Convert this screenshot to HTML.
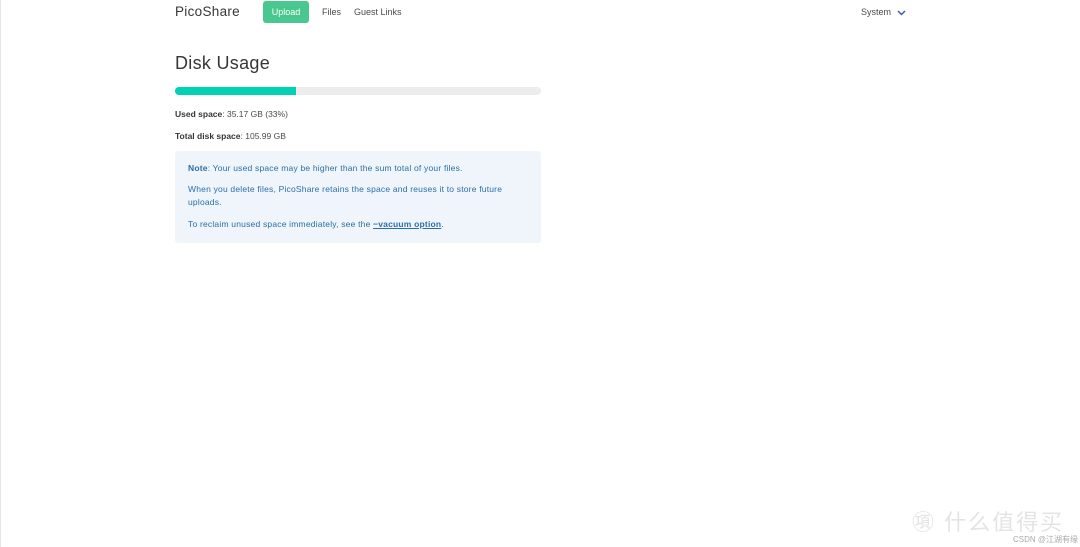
<!DOCTYPE html>
<html><head><meta charset="utf-8"><style>
html,body{margin:0;padding:0;background:#fff;width:1080px;height:547px;overflow:hidden;font-family:"Liberation Sans","Noto Sans CJK SC",sans-serif;color:#4a4a4a}
.edge{position:absolute;left:0;top:0;width:1px;height:547px;background:#e6e6e6}
.brand{position:absolute;left:175px;top:4px;font-size:13.5px;color:#363636;letter-spacing:.3px}
.up{position:absolute;left:263px;top:1px;width:46px;height:22px;background:#48c78e;border-radius:3px;color:#fff;font-size:9px;text-align:center;line-height:22px}
.nav{position:absolute;top:7px;font-size:9px;color:#4a4a4a}
h1{position:absolute;left:175px;top:53px;margin:0;font-size:18px;font-weight:normal;color:#363636;letter-spacing:.3px}
.bar{position:absolute;left:175px;top:87px;width:366px;height:8px;border-radius:4px;background:#ededed;overflow:hidden}
.bar div{width:121px;height:8px;background:#00d1b2}
.t{position:absolute;left:175px;font-size:8.5px;color:#4a4a4a}
.t b{color:#363636}
.note{position:absolute;left:175px;top:151px;width:366px;height:92px;background:#eff5fb;border-radius:3px;color:#296fa8;font-size:8.5px;letter-spacing:.2px}
.note p{position:absolute;left:13px;margin:0;width:330px;line-height:13px}
.note a{color:#296fa8;font-weight:bold;text-decoration:underline}
.wm{position:absolute;left:912px;top:505px;font-size:22px;color:#e4e4e4;letter-spacing:2px}
.csdn{position:absolute;left:1013px;top:534px;font-size:8px;color:#aaa}
</style></head><body>
<div class="edge"></div>
<div class="brand">PicoShare</div>
<div class="up">Upload</div>
<div class="nav" style="left:322px">Files</div>
<div class="nav" style="left:354px">Guest Links</div>
<div class="nav" style="left:861px">System</div>
<svg style="position:absolute;left:897px;top:10px" width="9" height="6" viewBox="0 0 9 6"><path d="M1 1L4.5 4.5L8 1" fill="none" stroke="#3e56c4" stroke-width="1.5"/></svg>
<h1>Disk Usage</h1>
<div class="bar"><div></div></div>
<div class="t" style="top:109px"><b>Used space</b>: 35.17 GB (33%)</div>
<div class="t" style="top:131px"><b>Total disk space</b>: 105.99 GB</div>
<div class="note">
<p style="top:11px"><b>Note</b>: Your used space may be higher than the sum total of your files.</p>
<p style="top:32px">When you delete files, PicoShare retains the space and reuses it to store future uploads.</p>
<p style="top:67px">To reclaim unused space immediately, see the <a>−vacuum option</a>.</p>
</div>
<div class="wm">㊠ 什么值得买</div>
<div class="csdn">CSDN @江湖有缘</div>
</body></html>
